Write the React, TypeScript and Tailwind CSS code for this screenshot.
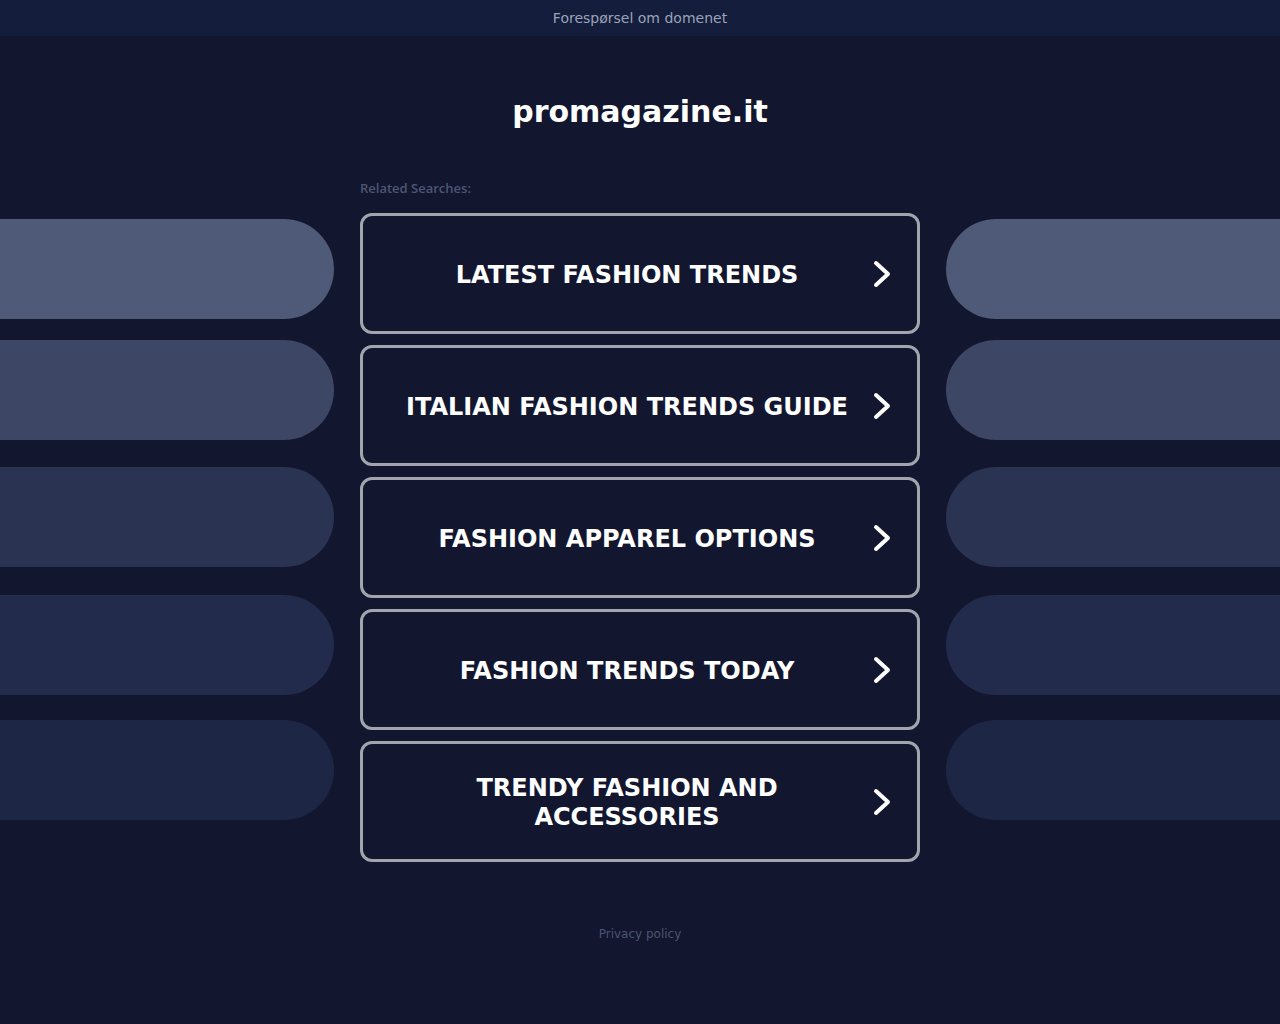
import React from 'react';

const searches = [
  'LATEST FASHION TRENDS',
  'ITALIAN FASHION TRENDS GUIDE',
  'FASHION APPAREL OPTIONS',
  'FASHION TRENDS TODAY',
  'TRENDY FASHION AND ACCESSORIES',
];

// decorative pills on both sides, top margins follow the picture
const pills = [
  { mt: 'mt-[6px]', bg: 'bg-[#4f5a78]' },
  { mt: 'mt-[21px]', bg: 'bg-[#3d4664]' },
  { mt: 'mt-[27px]', bg: 'bg-[#2b3352]' },
  { mt: 'mt-[28px]', bg: 'bg-[#222b4b]' },
  { mt: 'mt-[25px]', bg: 'bg-[#1d2645]' },
];

const Chevron: React.FC = () => (
  <svg viewBox="0 0 24 32" className="w-[24px] h-[32px] flex-shrink-0 ml-[9px]" fill="none">
    <polyline points="6,5 18,16 6,27" stroke="white" strokeWidth="4" strokeLinecap="round" strokeLinejoin="round" />
  </svg>
);

const SideColumn: React.FC<{ side: 'left' | 'right' }> = ({ side }) => (
  <div className="flex flex-col">
    {pills.map((p, i) => (
      <div
        key={i}
        className={`${p.mt} ${p.bg} h-[100px] ${side === 'left' ? 'rounded-r-[50px]' : 'rounded-l-[50px]'}`}
      />
    ))}
  </div>
);

export default function App() {
  return (
    <div className="min-h-[1024px] bg-[#12172f] text-white" style={{ fontFamily: '"DejaVu Sans", sans-serif' }}>
      <div className="h-[36px] bg-[#141d3b] flex items-center justify-center text-[14px] text-[#9aa3b8]">
        Forespørsel om domenet
      </div>

      <h1 className="mt-[58px] text-center text-[30px] leading-[36px] font-bold text-white">promagazine.it</h1>

      <div className="mt-[50px] grid grid-cols-[334px_560px_334px] gap-x-[26px]">
        <div />
        <div className="text-[13px] leading-[16px] font-semibold text-[#4c5672] mb-[17px]" style={{ fontFamily: '"Open Sans", sans-serif' }}>
          Related Searches:
        </div>
        <div />

        <SideColumn side="left" />
        <div className="flex flex-col gap-[11px]">
          {searches.map((s) => (
            <a
              key={s}
              href="#"
              className="h-[121px] flex items-center border-[3px] border-[#a2a5ad] rounded-[12px] pl-[30px] pr-[23px] bg-[#12172f]"
            >
              <span className="flex-1 pt-[3px] text-center text-[24px] leading-[29px] font-bold text-white">{s}</span>
              <Chevron />
            </a>
          ))}
        </div>
        <SideColumn side="right" />
      </div>

      <div className="mt-[64px] text-center text-[12px] leading-[16px] text-[#4b5470]">Privacy policy</div>
    </div>
  );
}
